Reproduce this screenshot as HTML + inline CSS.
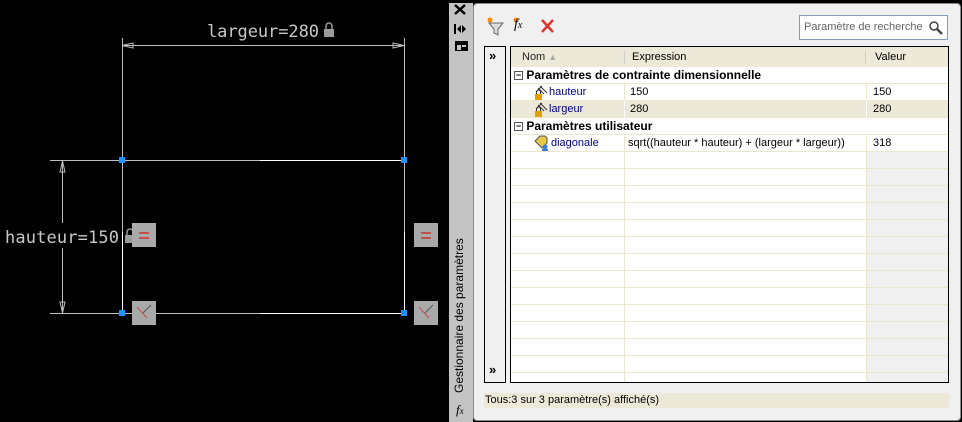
<!DOCTYPE html><html><head><style>
body{margin:0;width:962px;height:422px;background:#000;position:relative;overflow:hidden;font-family:"Liberation Sans",sans-serif;font-size:11px}
.a{position:absolute}
.cell{position:absolute;height:17px;line-height:17px;font-size:11px;color:#000}
.row{position:absolute;left:0;width:437px;height:16px;border-bottom:1px solid #ece6cf}
.vl{position:absolute;top:0;width:1px;height:17px;background:#ece6cf}
</style></head><body>
<svg class="a" style="left:0;top:0" width="446" height="422">
<g stroke="#bdbdbd" stroke-width="1" fill="none">
<line x1="122.5" y1="38" x2="122.5" y2="313"/>
<line x1="404.5" y1="38" x2="404.5" y2="313"/>
<line x1="122" y1="45.5" x2="404" y2="45.5"/>
<line x1="50" y1="160.5" x2="404" y2="160.5"/>
<line x1="50" y1="313.5" x2="404" y2="313.5"/>
<line x1="62.5" y1="160" x2="62.5" y2="223"/>
<line x1="62.5" y1="248" x2="62.5" y2="313"/>
<path d="M122 45.5 L133 43 L133 48 Z M404 45.5 L393 43 L393 48Z M62.5 161 L60 172 L65 172Z M62.5 313 L60 302 L65 302Z"/>
</g>
<g stroke="#fff"><line x1="260" y1="160.5" x2="404" y2="160.5"/><line x1="260" y1="313.5" x2="404" y2="313.5"/><line x1="404.5" y1="232" x2="404.5" y2="313"/><line x1="122.5" y1="232" x2="122.5" y2="313"/></g>
<text x="207" y="37" fill="#c8c8c8" font-size="17" font-family="DejaVu Sans Mono,monospace" textLength="112">largeur=280</text>
<text x="5" y="243" fill="#c8c8c8" font-size="17" font-family="DejaVu Sans Mono,monospace" textLength="114">hauteur=150</text>
<g fill="#9a9a9a"><rect x="324" y="29" width="10" height="8"/><rect x="125" y="235" width="10" height="8"/></g>
<g stroke="#9a9a9a" fill="none" stroke-width="1.5"><path d="M326 29v-3a3 3 0 0 1 6 0v3"/><path d="M127 235v-3a3 3 0 0 1 6 0v3"/></g>
<g fill="#1e90ff"><rect x="119" y="157" width="6" height="6"/><rect x="401" y="157" width="6" height="6"/><rect x="119" y="310" width="6" height="6"/><rect x="401" y="310" width="6" height="6"/></g>
<g><rect x="132" y="223" width="24" height="24" fill="#a9a9a9"/><rect x="414" y="223" width="24" height="24" fill="#a9a9a9"/><rect x="132" y="301" width="24" height="24" fill="#a9a9a9"/><rect x="414" y="301" width="24" height="24" fill="#a9a9a9"/></g>
<g fill="#c0504d"><rect x="139" y="232" width="10" height="2"/><rect x="139" y="237" width="10" height="2"/><rect x="421" y="232" width="10" height="2"/><rect x="421" y="237" width="10" height="2"/></g>
<g stroke-width="1"><path d="M137 307l10 11" stroke="#c0504d"/><path d="M143 313l8-8" stroke="#555"/><path d="M419 307l10 11" stroke="#c0504d"/><path d="M425 313l8-8" stroke="#555"/></g>
</svg>
<div class="a" style="left:449px;top:3px;width:24px;height:419px;background:#c4c4c4"></div>
<svg class="a" style="left:449px;top:0" width="24" height="60">
<path d="M6 5l10 9M16 5l-10 9" stroke="#000" stroke-width="2.5"/>
<path d="M6 24v10" stroke="#000" stroke-width="2"/><path d="M8 29l4-4v8z M17 29l-4-4v8z" fill="#000"/>
<rect x="6" y="41" width="13" height="10" fill="#000"/><rect x="8" y="45" width="4" height="5" fill="#c4c4c4"/><rect x="13" y="45" width="4" height="2" fill="#c4c4c4"/>
</svg>
<div class="a" style="left:452px;top:393px;transform-origin:0 0;transform:rotate(-90deg);font-size:12px;white-space:nowrap;color:#000">Gestionnaire des paramètres</div>
<div class="a" style="left:456px;top:402px;font-style:italic;font-family:'Liberation Serif',serif;font-size:13px">f<span style="font-size:9px">x</span></div>
<div class="a" style="left:473px;top:3px;width:486px;height:416px;background:#f0f0f0;border:1px solid #888;border-radius:4px"></div>
<svg class="a" style="left:485px;top:15px" width="70" height="22">
<path d="M4 8h14l-5 6v6l-4-2v-4z" fill="#ddd" stroke="#666"/>
<circle cx="5" cy="5" r="2.5" fill="#f80"/>
<circle cx="31" cy="5" r="2.5" fill="#f80"/>
<path d="M57 5l11 12M68 5l-11 12" stroke="#d33" stroke-width="2.5"/>
</svg>
<div class="a" style="left:514px;top:17px;font-style:italic;font-family:'Liberation Serif',serif;font-size:14px">f<span style="font-size:10px">x</span></div>
<div class="a" style="left:799px;top:15px;width:147px;height:23px;background:#fff;border:1px solid #7f9db9"><span class="a" style="left:4px;top:5px;color:#666">Paramètre de recherche</span>
<svg class="a" style="left:128px;top:4px" width="16" height="16"><circle cx="6" cy="6" r="4" fill="none" stroke="#444" stroke-width="1.5"/><path d="M9 9l5 5" stroke="#444" stroke-width="2.5"/></svg></div>
<div class="a" style="left:484px;top:46px;width:20px;height:335px;border:1px solid #000;background:#f0f0f0"></div>
<div class="a" style="left:489px;top:48px;font-weight:bold;font-size:13px">»</div>
<div class="a" style="left:489px;top:362px;font-weight:bold;font-size:13px">»</div>
<div class="a" style="left:510px;top:46px;width:437px;height:335px;border:1px solid #000;background:#fff;overflow:hidden">
<div class="a" style="left:355px;top:20px;width:82px;height:320px;background:#f0f0f0"></div>
<div class="a" style="left:113px;top:105px;width:1px;height:240px;background:#ece6cf"></div>
<div class="a" style="left:355px;top:105px;width:1px;height:240px;background:#ece6cf"></div>
<div class="a" style="left:0;top:105px;width:437px;height:240px;background:repeating-linear-gradient(to bottom,transparent 0,transparent 16px,#ece6cf 16px,#ece6cf 17px)"></div>
<div class="a" style="left:0;top:0;width:437px;height:20px;background:#ece9d8"></div>
<div class="a" style="left:11px;top:4px;color:#222">Nom <span style="color:#aaa;font-size:9px">▲</span></div>
<div class="a" style="left:113px;top:4px;width:1px;height:13px;background:#ccc"></div>
<div class="a" style="left:121px;top:4px">Expression</div>
<div class="a" style="left:354px;top:4px;width:1px;height:13px;background:#ccc"></div>
<div class="a" style="left:364px;top:4px">Valeur</div>
<div class="row" style="top:20px;background:#fff"></div>
<div class="row" style="top:37px;background:#fff"><div class="vl" style="left:113px"></div><div class="vl" style="left:355px"></div></div>
<div class="row" style="top:54px;background:#ece9d8"><div class="vl" style="left:113px;background:#fff"></div><div class="vl" style="left:355px;background:#fff"></div></div>
<div class="row" style="top:71px;background:#fff"></div>
<div class="row" style="top:88px;background:#fff"><div class="vl" style="left:113px"></div><div class="vl" style="left:355px"></div></div>
<div class="cell" style="left:3px;top:20px;font-weight:bold;font-size:12px"><span style="display:inline-block;width:7px;height:7px;border:1px solid #555;line-height:6px;font-size:9px;text-align:center;vertical-align:middle">−</span> Paramètres de contrainte dimensionnelle</div>
<div class="cell" style="left:3px;top:71px;font-weight:bold;font-size:12px"><span style="display:inline-block;width:7px;height:7px;border:1px solid #555;line-height:6px;font-size:9px;text-align:center;vertical-align:middle">−</span> Paramètres utilisateur</div>
<svg class="a" style="left:22px;top:38px" width="16" height="16"><path d="M3 7l6-6M7 1l7 7M5 3l6 6" stroke="#333" fill="none"/><rect x="2" y="9" width="7" height="6" fill="#e0a000"/><path d="M3.5 9v-2a2 2 0 0 1 4 0v2" stroke="#333" fill="none"/></svg>
<svg class="a" style="left:22px;top:55px" width="16" height="16"><path d="M3 7l6-6M7 1l7 7M5 3l6 6" stroke="#333" fill="none"/><rect x="2" y="9" width="7" height="6" fill="#e0a000"/><path d="M3.5 9v-2a2 2 0 0 1 4 0v2" stroke="#333" fill="none"/></svg>
<svg class="a" style="left:22px;top:88px" width="18" height="17"><path d="M2 6l5-5h5l2 2v5l-5 5z" fill="#e8c84a" stroke="#555"/><circle cx="12" cy="12" r="2.5" fill="#3a7bd5"/><rect x="9" y="14" width="6" height="2" fill="#3a7bd5"/></svg>
<div class="cell" style="left:38px;top:37px;color:#008">hauteur</div><div class="cell" style="left:119px;top:37px">150</div><div class="cell" style="left:362px;top:37px">150</div>
<div class="cell" style="left:38px;top:54px;color:#008">largeur</div><div class="cell" style="left:119px;top:54px">280</div><div class="cell" style="left:362px;top:54px">280</div>
<div class="cell" style="left:40px;top:88px;color:#008">diagonale</div><div class="cell" style="left:117px;top:88px">sqrt((hauteur * hauteur) + (largeur * largeur))</div><div class="cell" style="left:362px;top:88px">318</div>
</div>
<div class="a" style="left:484px;top:393px;width:464px;height:15px;background:#ece9d8;line-height:15px;padding-left:1px">Tous:3 sur 3 paramètre(s) affiché(s)</div>
</body></html>
